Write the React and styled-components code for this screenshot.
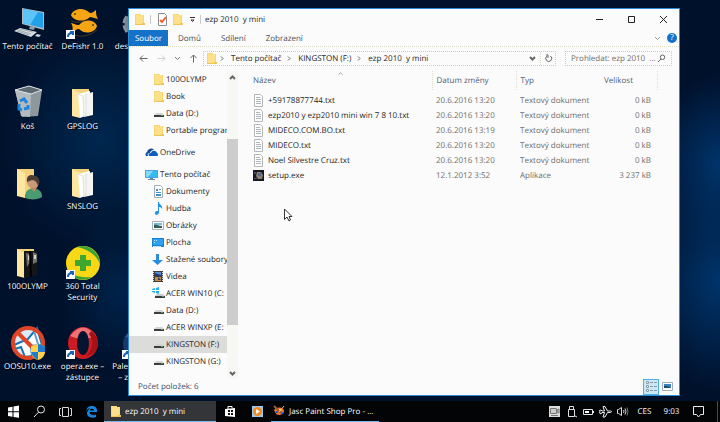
import styled, { createGlobalStyle, css } from "styled-components"

const places = [
    { icon: "folder", name: "100OLYMP", level: 2 },
    { icon: "folder", name: "Book", level: 2 },
    { icon: "drive", name: "Data (D:)", level: 2 },
    { icon: "folder", name: "Portable program", level: 2 },
    { icon: "cloud", name: "OneDrive", level: 1 },
    { icon: "monitor", name: "Tento počítač", level: 1 },
    { icon: "document", name: "Dokumenty", level: 2 },
    { icon: "music", name: "Hudba", level: 2 },
    { icon: "picture", name: "Obrázky", level: 2 },
    { icon: "desktop", name: "Plocha", level: 2 },
    { icon: "download", name: "Stažené soubory", level: 2 },
    { icon: "video", name: "Videa", level: 2 },
    { icon: "system", name: "ACER WIN10 (C:", level: 2 },
    { icon: "drive", name: "Data (D:)", level: 2 },
    { icon: "drive", name: "ACER WINXP (E:", level: 2 },
    { icon: "drive", name: "KINGSTON (F:)", level: 2, selected: true },
    { icon: "drive", name: "KINGSTON (G:)", level: 2 }
]

const files = [
    { icon: "text", name: "+59178877744.txt", date: "20.6.2016 13:20", type: "Textový dokument", size: "0 kB" },
    { icon: "text", name: "ezp2010 y ezp2010 mini win 7 8 10.txt", date: "20.6.2016 13:20", type: "Textový dokument", size: "0 kB" },
    { icon: "text", name: "MIDECO.COM.BO.txt", date: "20.6.2016 13:19", type: "Textový dokument", size: "0 kB" },
    { icon: "text", name: "MIDECO.txt", date: "20.6.2016 13:20", type: "Textový dokument", size: "0 kB" },
    { icon: "text", name: "Noel Silvestre Cruz.txt", date: "20.6.2016 13:20", type: "Textový dokument", size: "0 kB" },
    { icon: "setup", name: "setup.exe", date: "12.1.2012 3:52", type: "Aplikace", size: "3 237 kB" }
]

const shortcuts = [
    { col: 1, row: 1, icon: "computer", name: "Tento počítač" },
    { col: 1, row: 2, icon: "bin", name: "Koš" },
    { col: 1, row: 3, icon: "user", name: "" },
    { col: 1, row: 4, icon: "olymp", name: "100OLYMP" },
    { col: 1, row: 5, icon: "oosu", name: "OOSU10.exe" },
    { col: 2, row: 1, icon: "fish", name: "DeFishr 1.0", link: true },
    { col: 2, row: 2, icon: "papers", name: "GPSLOG" },
    { col: 2, row: 3, icon: "papers", name: "SNSLOG" },
    { col: 2, row: 4, icon: "security", name: "360 Total Security", link: true },
    { col: 2, row: 5, icon: "opera", name: "opera.exe – zástupce", link: true },
    { col: 3, row: 1, icon: "gear", name: "des" },
    { col: 3, row: 5, icon: "moon", name: "Pale – z", link: true }
]

const smallIcons = {
    folder: (
        <>
            <path d="M2 1h6v1h3v10H2z" fill="#f6d774" />
            <path d="M3 2h7v9H3z" fill="#ffe08a" />
            <path d="M9 10h3v2H2v-1h7z" fill="#ecc457" />
        </>
    ),
    drive: (
        <>
            <path d="M4 6h6l2 2H2z" fill="#d2d4d5" />
            <path d="M2 8h10v2H2z" fill="#3a3d40" />
            <path d="M9 8h2v1H9z" fill="#5fa068" />
        </>
    ),
    system: (
        <>
            <path d="M0 2l3-1v2H0zM4 1l3-1v3H4zM0 4h3v2L0 5zM4 4h3v3L4 6z" fill="#21b2ee" />
            <path d="M5 7h6l2 2H3z" fill="#c9cbcd" />
            <path d="M3 9h10v2H3z" fill="#3a3d40" />
            <path d="M10 9h2v1h-2z" fill="#5fa068" />
        </>
    ),
    cloud: (
        <>
            <path d="M1 10a3 3 0 0 1 1-4 4 4 0 0 1 7-2c-3 0-4 2-4 3-2 0-3 1-2 3z" fill="#174a9c" />
            <path d="M4 10c-1-2 0-3 2-3 1-3 5-3 6 0 2 1 1 3 0 3z" fill="#0c5fc0" />
        </>
    ),
    monitor: (
        <>
            <path d="M0 2h13v8H0z" fill="#4aa3dc" />
            <path d="M1 3h11v6H1z" fill="#35bdf2" />
            <path d="M1 3h7L3 9H1z" fill="#86daf8" />
            <path d="M5 10h3v1h2v1H3v-1h2z" fill="#6e8798" />
        </>
    ),
    document: (
        <>
            <path d="M2.500 .5h6l2 2v10h-8z" fill="#fff" stroke="#a3acb3" />
            <path d="M4 4h2v2H4zM7 4h2v1H7zM4 7h5v1H4zM4 9h5v2H4z" fill="#3d94cc" />
        </>
    ),
    music: <path d="M6 0h1c0 3 4 3 3 7-1-2-2-2-3-2v5c0 4-5 3-4 1 0-2 2-2 3-2z" fill="#1e90e8" />,
    picture: (
        <>
            <path d="M.5 2.500h11v8H.5z" fill="#fff" stroke="#aab2b8" />
            <path d="M2 4h8v2H2z" fill="#78b9de" />
            <path d="M2 6c3-1 5 1 8 1v2H2z" fill="#31605b" />
        </>
    ),
    desktop: (
        <>
            <path d="M0 2h12v9H0z" fill="#1683d8" />
            <path d="M1 3h10v6H1z" fill="#2da0f0" />
            <path d="M2 4h1v1H2zM2 6h1v1H2zM4 4h1v1H4zM1 10h8v1H1z" fill="#bfe3fa" />
        </>
    ),
    download: <path d="M4 1h3v6h4l-5.500 5L0 7h4z" fill="#2b8de0" />,
    video: (
        <>
            <path d="M1 1h10v11H1z" fill="#3c3e44" />
            <path d="M3 2h6v4H3z" fill="#5c8ed0" />
            <path d="M3 7h6v4H3z" fill="#c98b3d" />
            <path d="M3 3l6 2v1H3zM6 7l3 3H6z" fill="#243a77" />
            <path d="M1.500 2v10M10.500 2v10" stroke="#d6d6d6" strokeDasharray="1 1" />
        </>
    ),
    text: (
        <>
            <path d="M1.500 .5h6l2 2v10h-8z" fill="#fff" stroke="#b4b7ba" />
            <path d="M3 3.500h4M3 5.500h5M3 7.500h5M3 9.500h5" stroke="#b0b7bb" />
        </>
    ),
    setup: (
        <>
            <path d="M0 1h11v11H0z" fill="#17171d" />
            <path d="M4 3h4l2 3-1 4H5L3 7z" fill="#8b8173" />
            <path d="M5 4h3v3H5z" fill="#56687e" />
            <path d="M1 9h3v1H1zM1 3h2v2H1z" fill="#3f4a78" />
        </>
    ),
    check: (
        <>
            <path d="M2.500 .5h6l2 2v10h-8z" fill="#fff" stroke="#8a8f94" />
            <path d="M4 7l2 2 4-5" fill="none" stroke="#f0642d" strokeWidth="2" />
        </>
    ),
    details: (
        <>
            <path d="M1.500 1.500h2v2h-2zM1.500 5.500h2v2h-2zM1.500 9.500h2v2h-2z" fill="#fff" stroke="#8d9ca6" />
            <path d="M5 2.500h3M9 2.500h3M5 6.500h3M9 6.500h3M5 10.500h3M9 10.500h3" stroke="#8799a6" />
        </>
    ),
    preview: (
        <>
            <path d="M1.500 2.500h10v8h-10z" fill="#fff" stroke="#9bafbd" />
            <path d="M3 4h7v4H3z" fill="#3a82c8" />
            <path d="M3 6c3-1 4 1 6 1v1H3z" fill="#204d63" />
        </>
    ),
    windows: <path d="M1 2.500l4.500-.8v4.500H1zM6.500 1.500L12 .6v5.600H6.500zM1 7.200h4.500v4.500L1 11zM6.500 7.200H12v5.600l-5.500-.9z" fill="#fff" />,
    find: (
        <g fill="none" stroke="#e8e8e8">
            <circle cx="8" cy="4.500" r="3.500" />
            <path d="M5.500 7.200L1 12" />
        </g>
    ),
    tasks: (
        <g fill="none" stroke="#d8d8d8">
            <path d="M3.500 2.500h6v9h-6zM2 3.500H.5v7H2M11 3.500h1.500v7H11" />
        </g>
    ),
    edge: <path d="M1 6C2 2 4 1 7 1c4 0 5.500 3 5 6H4.500c0 3 4 4 6.500 2.500V12C7 13.500 2 12.500 2 8c0-2 2-4 3-5-2 .5-3 1.500-4 3zm3.600-.5H9c0-2.500-4-2.500-4.400 0z" fill="#1587e0" />,
    store: (
        <>
            <path d="M1 4l10-1v9l-10-1z" fill="#fff" />
            <path d="M4 4V1.500h4V3" fill="none" stroke="#fff" />
            <path d="M4 5h2v2H4zM7 5h2v2H7zM4 8h2v2H4zM7 8h2v2H7z" fill="#111" />
        </>
    ),
    player: (
        <>
            <path d="M1 1h11v11H1z" fill="#9fc8ec" />
            <circle cx="6.500" cy="6.500" r="4.500" fill="#f38a1c" />
            <path d="M5 4l4 2.500L5 9z" fill="#fff" />
        </>
    ),
    paint: (
        <>
            <path d="M1 5c3-4 10-3 10 1 0 3-3 4-5 4S2 8 1 5z" fill="#e8742e" />
            <path d="M3 6h2v2H3zM8 7h2v2H8z" fill="#3257c8" />
            <path d="M6 4h2v2H6z" fill="#ffe45b" />
            <path d="M1 1l7 7" stroke="#9d5a2d" strokeWidth="2" />
            <path d="M11 1L6 7" stroke="#f7c06a" />
        </>
    ),
    capture: (
        <>
            <path d="M1 1h11v11H1z" fill="#dcdcdc" />
            <path d="M2.500 3.500h6v5h-6zM9 5l2-1v4L9 7zM3 10.500h7" fill="#ccc" stroke="#777" />
        </>
    ),
    usb: (
        <g fill="none" stroke="#e2e2e2">
            <path d="M4.500 4V1.500h4V4M3.500 4.500h6v7h-6z" />
            <path d="M10 11l2 1" />
        </g>
    ),
    battery: (
        <>
            <path d="M1.500 4.500h9v5h-9z" fill="none" stroke="#e2e2e2" />
            <path d="M3 6h4v2H3zM11 6h1v2h-1z" fill="#fff" />
        </>
    ),
    plane: <path d="M.5 5.500L2 5l1 1h2.500L4 1.500h2L8.500 6H11c2 0 2 1.500 0 1.500H8.500L6 12H4l1.500-4.500H3L2 9 .5 8l.5-1z" fill="none" stroke="#eee" />,
    sound: (
        <g fill="none" stroke="#ddd">
            <path d="M1.500 4.500h1l3-2v8l-3-2h-1zM7.500 5q1 1.500 0 3M9 3.500q2 3 0 6" />
            <path d="M11 2.500q2 4 0 8" stroke="#777" />
        </g>
    ),
    message: <path d="M1.500 1.500h10v8h-3l-2 2.500-2-2.500h-3z" fill="none" stroke="#eee" />
}

const folderBack = (
    <>
        <path d="M7 4h17v26H7z" fill="#f2d27a" />
        <path d="M7 4l8 4v25l-8-2z" fill="#ffe7a1" />
    </>
)

const bigIcons = {
    computer: (
        <>
            <path d="M12 3l22 4v18l-22-6z" fill="#a9bac6" />
            <path d="M13 4l20 4v15l-20-5z" fill="#20a0e8" />
            <path d="M13 4l15 3-8 13-7-2z" fill="#5cc4f6" />
            <path d="M20 21l5 1-1 3-5-1z" fill="#8ba0ad" />
            <path d="M10 23l17 4-6 5-17-6z" fill="#d5dce1" />
            <path d="M10 24l13 3M8 25l13 4M7 26l12 4" stroke="#a3adb4" />
            <path d="M27 29l4 1-2 2-4-1z" fill="#d5dce1" />
        </>
    ),
    bin: (
        <>
            <path d="M5 5l14-4 13 4-4 26-16 1z" fill="#8e979e" />
            <path d="M5 5l14-4 13 4-11 4z" fill="#5e6a73" />
            <path d="M5 5l16 4-1 23-9-1z" fill="#b4bbc0" />
            <path d="M5 5l16 4 11-4-13-4z" fill="none" stroke="#dfe3e6" />
            <path d="M10 16l4-2 3 4M9 19l0 5 3 1M14 24l4-1v-3" fill="none" stroke="#1f85db" strokeWidth="3" />
        </>
    ),
    user: (
        <>
            {folderBack}
            <path d="M15 33c0-7 3-9 8-10 6 1 9 3 9 9-4 3-12 3-17 1z" fill="#4c9a72" />
            <path d="M20 22l4 5 4-6v-4h-7z" fill="#b98a67" />
            <circle cx="23" cy="17" r="6" fill="#c89a78" />
            <path d="M17 17c-1-7 4-8 8-6 4 0 6 6 3 10-1-4-3-6-6-6z" fill="#4b3c36" />
        </>
    ),
    olymp: (
        <>
            {folderBack}
            <path d="M14 6h14l-1 24-13 3z" fill="#14161a" />
            <path d="M16 8l4 1v8l-3 5zM23 7l4 2v8l-4 2z" fill="#75726e" />
            <path d="M18 10l2 1v4h-2zM24 10h2v4h-2z" fill="#d4d0c7" />
            <path d="M20 6l1 26" stroke="#000" strokeWidth="2" />
        </>
    ),
    papers: (
        <>
            {folderBack}
            <path d="M13 9l12-3v23l-10 4z" fill="#fff" />
            <path d="M18 10l10-3v23l-9 2z" fill="#f4f4f2" />
            <path d="M13 9l5 2 1 21M21 8v23" fill="none" stroke="#e0e0dc" />
        </>
    ),
    oosu: (
        <>
            <circle cx="18" cy="18" r="16" fill="#dcebf6" />
            <path d="M4 20l14-6 9-11 5 17-11 1 1 10-7 1-4-10-6 2z" fill="#fff" stroke="#1672b8" strokeWidth="2" />
            <path d="M24 6l4 13" stroke="#5f9fcb" strokeWidth="2" />
            <path d="M7 7l22 22" stroke="#dd4526" strokeWidth="4" />
            <circle cx="18" cy="18" r="15" fill="none" stroke="#dd4526" strokeWidth="4" />
            <path d="M21 21l7-2 7 2v7q-2 6-7 7-5-1-7-7z" fill="#ffd34c" />
            <path d="M28 19l7 2v6h-7zM21 27h7v8q-5-2-7-8z" fill="#1e7bd0" />
        </>
    ),
    fish: (
        <>
            <path d="M6 10c2-6 12-9 19-2 3 0 4-2 6-3 0 3 0 6 2 9-4-1-6-2-8-2-6 6-17 4-19-2z" fill="#f4a414" />
            <path d="M32 21c-2-6-12-8-18-1-3 0-4-1-8-2 2 3 2 6 1 9 3-1 4-3 7-3 6 6 16 4 18-3z" fill="#f4a414" />
            <path d="M8 30q14 4 24-5M6 16q8 3 14-1" fill="none" stroke="#8d5b0e" strokeOpacity=".5" />
            <circle cx="10" cy="9" r="1" fill="#5e3a00" />
            <circle cx="28" cy="20" r="1" fill="#5e3a00" />
        </>
    ),
    security: (
        <>
            <circle cx="18" cy="18" r="17" fill="#f7d716" />
            <path d="M12 2c12-4 23 6 23 17-4-10-13-15-23-17zM27 32c-8 5-18 3-22-4 7 4 15 5 22 4z" fill="#3aa535" />
            <path d="M15 10h6v5h5v6h-5v5h-6v-5h-5v-6h5z" fill="#3fa62f" />
        </>
    ),
    opera: (
        <>
            <ellipse cx="18" cy="18" rx="15" ry="16" fill="#cc1b22" />
            <path d="M5 11q13-17 26 0-13 6-26 0" fill="#ee7273" />
            <path d="M24 9q8 11-3 22 13-2 12-15-2-7-7-10z" fill="#a51117" />
            <ellipse cx="18" cy="18" rx="6" ry="12" fill="#07142f" />
        </>
    ),
    gear: (
        <>
            <circle cx="15" cy="19" r="10" fill="none" stroke="#8e979e" strokeWidth="7" strokeDasharray="6 2" />
            <circle cx="15" cy="19" r="9" fill="none" stroke="#79848c" strokeWidth="5" />
        </>
    ),
    moon: (
        <>
            <circle cx="18" cy="19" r="16" fill="#19396b" />
            <path d="M4 12q10-12 18-6-10 8-18 6z" fill="#355c91" />
        </>
    )
}

export default function App() {
    return (
        <>
            <GlobalStyle />
            <Screen>
                <Desktop>
                    {shortcuts.map((item) => (
                        <Shortcut
                            key={item.icon + item.name}
                            $col={item.col}
                            $row={item.row}
                            aria-label={item.name || "Uživatel"}
                        >
                            <svg width="36" height="36" viewBox="0 0 36 36" aria-hidden="true">
                                {bigIcons[item.icon]}
                                {item.link && (
                                    <>
                                        <path d="M1 25h9v9H1z" fill="#fff" />
                                        <path d="M3 32q0-4 4-4M5 27h3v3" fill="none" stroke="#1b62b5" strokeWidth="2" />
                                    </>
                                )}
                            </svg>
                            <span>{item.name}</span>
                        </Shortcut>
                    ))}
                    <Explorer />
                </Desktop>
                <Taskbar />
            </Screen>
        </>
    )
}

function Icon({ name }) {
    return (
        <Glyph viewBox="0 0 13 13" aria-hidden="true">
            {smallIcons[name]}
        </Glyph>
    )
}

function Line({ d, color = "#666", size = 9, width = 1 }) {
    return (
        <svg width={size} height={size} viewBox="0 0 9 9" fill="none" stroke={color} strokeWidth={width} aria-hidden="true">
            <path d={d} />
        </svg>
    )
}

const down = "M2 3l2.500 2.500L7 3"
const up = "M2 6l2.500-2.500L7 6"
const right = "M3 2.500l2 2-2 2"

function Explorer() {
    return (
        <Window>
            <TitleBar>
                <Icon name="folder" />
                <Divider />
                <Tool aria-label="Vlastnosti"><Icon name="check" /></Tool>
                <Tool aria-label="Nová složka"><Icon name="folder" /></Tool>
                <Tool aria-label="Přizpůsobit panel"><Line d="M2 2.500h5M3 5h3L4.500 6.500z" color="#333" /></Tool>
                <Divider />
                <Title>ezp 2010  y mini</Title>
                <WindowButton aria-label="Minimalizovat"><Line d="M1 4.500h7" color="#222" /></WindowButton>
                <WindowButton aria-label="Maximalizovat"><Line d="M1.500 1.500h6v6h-6z" color="#222" /></WindowButton>
                <WindowButton aria-label="Zavřít"><Line d="M1 1l7 7M8 1L1 8" color="#222" /></WindowButton>
            </TitleBar>
            <Ribbon>
                <Tab $main>Soubor</Tab>
                <Tab>Domů</Tab>
                <Tab>Sdílení</Tab>
                <Tab>Zobrazení</Tab>
                <RibbonEnd>
                    <Tool aria-label="Rozbalit pás karet"><Line d={down} color="#999" /></Tool>
                    <Help aria-label="Nápověda">?</Help>
                </RibbonEnd>
            </Ribbon>
            <AddressRow>
                <NavButton aria-label="Zpět"><Line d="M8.500 4.500H1M4 1.500l-3 3 3 3" /></NavButton>
                <NavButton aria-label="Vpřed"><Line d="M.5 4.500H8M5 1.500l3 3-3 3" color="#d0d0d0" /></NavButton>
                <NavButton aria-label="Poslední umístění" $narrow><Line d={down} color="#777" /></NavButton>
                <NavButton aria-label="Nahoru"><Line d="M4.500 8.500V1M1.500 4l3-3 3 3" /></NavButton>
                <Address>
                    <Icon name="folder" />
                    <Line d={right} />
                    <Crumb>Tento počítač</Crumb>
                    <Line d={right} />
                    <Crumb>KINGSTON (F:)</Crumb>
                    <Line d={right} />
                    <Crumb>ezp 2010  y mini</Crumb>
                    <AddressEnd>
                        <Tool aria-label="Předchozí umístění"><Line d={down} width={2} /></Tool>
                        <Refresh aria-label="Aktualizovat"><Line d="M6.500 2A3 3 0 1 1 3 2M2 1h2v3" /></Refresh>
                    </AddressEnd>
                </Address>
                <Search>
                    <input type="text" aria-label="Prohledat" placeholder="Prohledat: ezp 2010  ..." />
                    <Line d="M4 5L1 8M5.500 1a2.200 2.200 0 1 1 0 4.500 2.200 2.200 0 0 1 0-4.500" />
                </Search>
            </AddressRow>
            <Body>
                <Sidebar>
                    <Places aria-label="Navigační podokno">
                        {places.map((place, i) => (
                            <Place key={i} href="#" $level={place.level} $selected={place.selected}>
                                <Icon name={place.icon} />
                                <span>{place.name}</span>
                            </Place>
                        ))}
                    </Places>
                    <Scrollbar>
                        <Line d={up} width={2} />
                        <Track><Thumb /></Track>
                        <Line d={down} width={2} />
                    </Scrollbar>
                </Sidebar>
                <Content>
                    <SortMark><Line d={up} color="#888" size={7} /></SortMark>
                    <FileTable>
                        <colgroup>
                            <col />
                            <Column $width={84} />
                            <Column $width={84} />
                            <Column $width={57} />
                            <Column $width={22} />
                        </colgroup>
                        <thead>
                            <tr>
                                <Head>Název</Head>
                                <Head>Datum změny</Head>
                                <Head $plain>Typ</Head>
                                <Head>Velikost</Head>
                                <td />
                            </tr>
                        </thead>
                        <tbody>
                            {files.map((file) => (
                                <tr key={file.name}>
                                    <Cell>
                                        <FileName>
                                            <Icon name={file.icon} />
                                            {file.name}
                                        </FileName>
                                    </Cell>
                                    <Cell>{file.date}</Cell>
                                    <Cell>{file.type}</Cell>
                                    <Cell $size>{file.size}</Cell>
                                    <td />
                                </tr>
                            ))}
                        </tbody>
                    </FileTable>
                    <Pointer width="10" height="14" viewBox="0 0 10 14" aria-hidden="true">
                        <path d="M1.500 1v10.500L4 9l2 4 1.500-1L6 8.500h3z" fill="#fff" stroke="#333" />
                    </Pointer>
                </Content>
            </Body>
            <StatusBar>
                Počet položek: 6
                <Views>
                    <ViewButton aria-label="Podrobnosti" $active><Icon name="details" /></ViewButton>
                    <ViewButton aria-label="Velké ikony"><Icon name="preview" /></ViewButton>
                </Views>
            </StatusBar>
        </Window>
    )
}

function Taskbar() {
    return (
        <Bar>
            <Launch aria-label="Start"><Icon name="windows" /></Launch>
            <Launch aria-label="Hledat"><Icon name="find" /></Launch>
            <Launch aria-label="Zobrazení úloh"><Icon name="tasks" /></Launch>
            <Launch aria-label="Edge"><Icon name="edge" /></Launch>
            <Apps>
                <AppButton $active>
                    <Icon name="folder" />
                    ezp 2010  y mini
                </AppButton>
                <Launch aria-label="Store"><Icon name="store" /></Launch>
                <Launch aria-label="Přehrávač"><Icon name="player" /></Launch>
                <AppButton>
                    <Icon name="paint" />
                    Jasc Paint Shop Pro - ...
                </AppButton>
            </Apps>
            <Tray>
                <TrayButton aria-label="Záznam"><Icon name="capture" /></TrayButton>
                <TrayButton aria-label="USB"><Icon name="usb" /></TrayButton>
                <TrayButton aria-label="Baterie"><Icon name="battery" /></TrayButton>
                <TrayButton aria-label="Režim Letadlo"><Icon name="plane" /></TrayButton>
                <TrayButton aria-label="Hlasitost"><Icon name="sound" /></TrayButton>
                <TrayButton $wide>CES</TrayButton>
                <TrayButton $wide>9:03</TrayButton>
                <TrayButton $wide aria-label="Centrum akcí"><Icon name="message" /></TrayButton>
                <ShowDesktop aria-label="Zobrazit plochu" />
            </Tray>
        </Bar>
    )
}

const GlobalStyle = createGlobalStyle`
    * {
        box-sizing: border-box;
    }
    body {
        margin: 0;
        font-family: "Open Sans", "Noto Sans", sans-serif;
        font-size: 8px;
        line-height: 11px;
        text-rendering: geometricPrecision;
    }
    button, input {
        margin: 0;
        padding: 0;
        border: 0;
        background: none;
        color: inherit;
        font: inherit;
        text-rendering: inherit;
    }
    svg {
        display: block;
        flex: none;
    }
`

const center = css`
    display: flex;
    align-items: center;
    justify-content: center;
`

const Screen = styled.div`
    display: flex;
    flex-direction: column;
    height: 100vh;
`

const Desktop = styled.main`
    position: relative;
    flex: 1;
    display: grid;
    grid-template-columns: 55px 55px 18px;
    grid-auto-rows: 80px;
    min-height: 0;
    padding-top: 5px;
    overflow: hidden;
    background:
        radial-gradient(ellipse 70px 90px at 100% 165px, #00356c, transparent),
        radial-gradient(ellipse 80px 110px at 100% 280px, #00356c, transparent),
        radial-gradient(ellipse 100px 110px at 100px 140px, #00274f, transparent),
        radial-gradient(ellipse 60px 80px at 120px 290px, #00234a, transparent),
        #00112c;
`

const Shortcut = styled.button`
    grid-column: ${(props) => props.$col};
    grid-row: ${(props) => props.$row};
    display: flex;
    flex-direction: column;
    align-items: ${(props) => (props.$col === 3 ? "flex-start" : "center")};
    padding-left: ${(props) => (props.$col === 3 ? "3px" : "0")};
    color: #ffffff;
    text-shadow: 1px 1px 1px #000000;

    svg {
        margin-left: ${(props) => (props.$col === 3 ? "8px" : "0")};
    }

    span {
        align-self: ${(props) => (props.$col === 3 ? "flex-end" : "center")};
        text-align: ${(props) => (props.$col === 3 ? "right" : "center")};
    }
`

const Window = styled.section`
    position: absolute;
    top: 8px;
    right: 40px;
    bottom: 5px;
    left: 128px;
    display: flex;
    flex-direction: column;
    border: 1px solid #2b8ad6;
    background-color: #fbfbfb;
    color: #1e1e1e;
`

const Glyph = styled.svg`
    width: 13px;
    height: 13px;
`

const TitleBar = styled.header`
    display: flex;
    align-items: center;
    height: 21px;
    padding-left: 4px;

    > svg {
        margin-right: 4px;
    }
`

const Divider = styled.div`
    width: 1px;
    height: 9px;
    margin-right: 4px;
    background-color: #c9c9c9;
`

const Tool = styled.button`
    ${center}
    min-width: 13px;
    height: 13px;
    margin: 0 1px;
`

const Title = styled.h1`
    flex: 1;
    margin: 0;
    font-size: 8px;
    font-weight: 400;
    white-space: pre;
`

const WindowButton = styled.button`
    ${center}
    width: 32px;
    height: 21px;
`

const Ribbon = styled.nav`
    display: flex;
    height: 17px;
    border-bottom: 1px dotted #dcdcc0;
`

const Tab = styled.button`
    padding: 0 10px;
    color: #4a4f57;

    ${(props) => props.$main && css`
        width: 39px;
        padding: 0;
        background-color: #1473c8;
        color: #ffffff;
    `}
`

const RibbonEnd = styled.div`
    display: flex;
    align-items: center;
    gap: 2px;
    margin-left: auto;
    padding-right: 2px;
`

const Help = styled.button`
    width: 10px;
    height: 10px;
    border-radius: 5px;
    background-color: #1473c8;
    color: #ffffff;
    line-height: 10px;
    text-align: center;
`

const AddressRow = styled.div`
    display: flex;
    align-items: center;
    padding: 4px 7px 0 5px;
`

const NavButton = styled.button`
    ${center}
    width: ${(props) => (props.$narrow ? "14px" : "18px")};
    height: 15px;
`

const Address = styled.div`
    flex: 1;
    display: flex;
    align-items: center;
    height: 15px;
    margin: 0 9px 0 1px;
    padding-left: 1px;
    border: 1px dotted #c8ccc8;
`

const Crumb = styled.span`
    margin: 0 4px;
    white-space: pre;
`

const AddressEnd = styled.div`
    display: flex;
    margin-left: auto;
`

const Refresh = styled.button`
    ${center}
    width: 15px;
    border-left: 1px dotted #d4d4c0;
`

const Search = styled.label`
    display: flex;
    align-items: center;
    width: 107px;
    height: 15px;
    padding: 0 5px;
    border: 1px dotted #c8ccc8;

    input {
        flex: 1;
        min-width: 0;
        outline: 0;
    }

    input::placeholder {
        color: #6d6d6d;
        white-space: pre;
    }
`

const Body = styled.div`
    flex: 1;
    display: flex;
    min-height: 0;
    padding-top: 5px;
`

const Sidebar = styled.aside`
    display: flex;
    width: 109px;
`

const Places = styled.nav`
    flex: 1;
    min-width: 0;
    overflow: hidden;
`

const Place = styled.a`
    display: flex;
    align-items: center;
    gap: ${(props) => (props.$level === 1 ? "2px" : "1px")};
    height: 17px;
    margin-top: ${(props) => (props.$level === 1 ? "5px" : "0")};
    padding-left: ${(props) => (props.$level === 1 ? "16px" : "23px")};
    background-color: ${(props) => (props.$selected ? "#dcdcda" : "transparent")};
    color: inherit;
    text-decoration: none;
    white-space: nowrap;
`

const Scrollbar = styled.div`
    display: flex;
    flex-direction: column;
    align-items: center;
    width: 11px;
    padding-top: 2px;
    background-color: #f7f7f3;
`

const Track = styled.div`
    flex: 1;
    align-self: stretch;
    padding: 57px 0 44px;
`

const Thumb = styled.div`
    height: 100%;
    background-color: #cdcdcd;
`

const Content = styled.div`
    position: relative;
    flex: 1;
`

const SortMark = styled.div`
    position: absolute;
    top: -1px;
    left: 99px;
`

const FileTable = styled.table`
    width: 100%;
    border-collapse: collapse;
    table-layout: fixed;
    color: #6d6d6d;

    tbody::before {
        content: "";
        display: block;
        height: 3px;
    }
`

const Column = styled.col`
    width: ${(props) => props.$width}px;
`

const Head = styled.th`
    height: 19px;
    padding: 0 0 0 4px;
    border-right: ${(props) => (props.$plain ? "0" : "1px dotted #dedec8")};
    color: #4c607a;
    font-weight: 400;
    text-align: left;

    &:first-child {
        padding-left: 15px;
    }
`

const Cell = styled.td`
    height: 15px;
    padding: 0 ${(props) => (props.$size ? "6px" : "0")} 0 4px;
    text-align: ${(props) => (props.$size ? "right" : "left")};
    white-space: nowrap;

    &:first-child {
        padding-left: 15px;
    }
`

const FileName = styled.div`
    display: flex;
    align-items: center;
    gap: 2px;
    color: #1e1e1e;
`

const Pointer = styled.svg`
    position: absolute;
    top: 137px;
    left: 45px;
`

const StatusBar = styled.footer`
    display: flex;
    align-items: center;
    height: 17px;
    padding: 0 4px 0 9px;
    color: #3a506e;
`

const Views = styled.div`
    display: flex;
    margin-left: auto;
`

const ViewButton = styled.button`
    ${center}
    width: 16px;
    height: 16px;
    border: 1px solid ${(props) => (props.$active ? "#4fb0e6" : "transparent")};
    background-color: ${(props) => (props.$active ? "#cbe8f6" : "transparent")};
`

const Bar = styled.footer`
    flex: none;
    display: flex;
    height: 21px;
    background-color: #030406;
    color: #ffffff;
`

const Launch = styled.button`
    ${center}
    width: 26px;
`

const Apps = styled.div`
    display: flex;
    gap: 1px;
`

const AppButton = styled.button`
    display: flex;
    align-items: center;
    gap: 3px;
    width: ${(props) => (props.$active ? "112px" : "108px")};
    padding-left: ${(props) => (props.$active ? "5px" : "2px")};
    border-bottom: 1px solid #76b9ed;
    background-color: ${(props) => (props.$active ? "#333539" : "transparent")};
    white-space: pre;
`

const Tray = styled.div`
    display: flex;
    margin-left: auto;
`

const TrayButton = styled.button`
    ${center}
    width: ${(props) => (props.$wide ? "27px" : "17px")};
`

const ShowDesktop = styled.button`
    width: 3px;
    margin-left: 5px;
    border-left: 1px solid #4a4a4a;
`
